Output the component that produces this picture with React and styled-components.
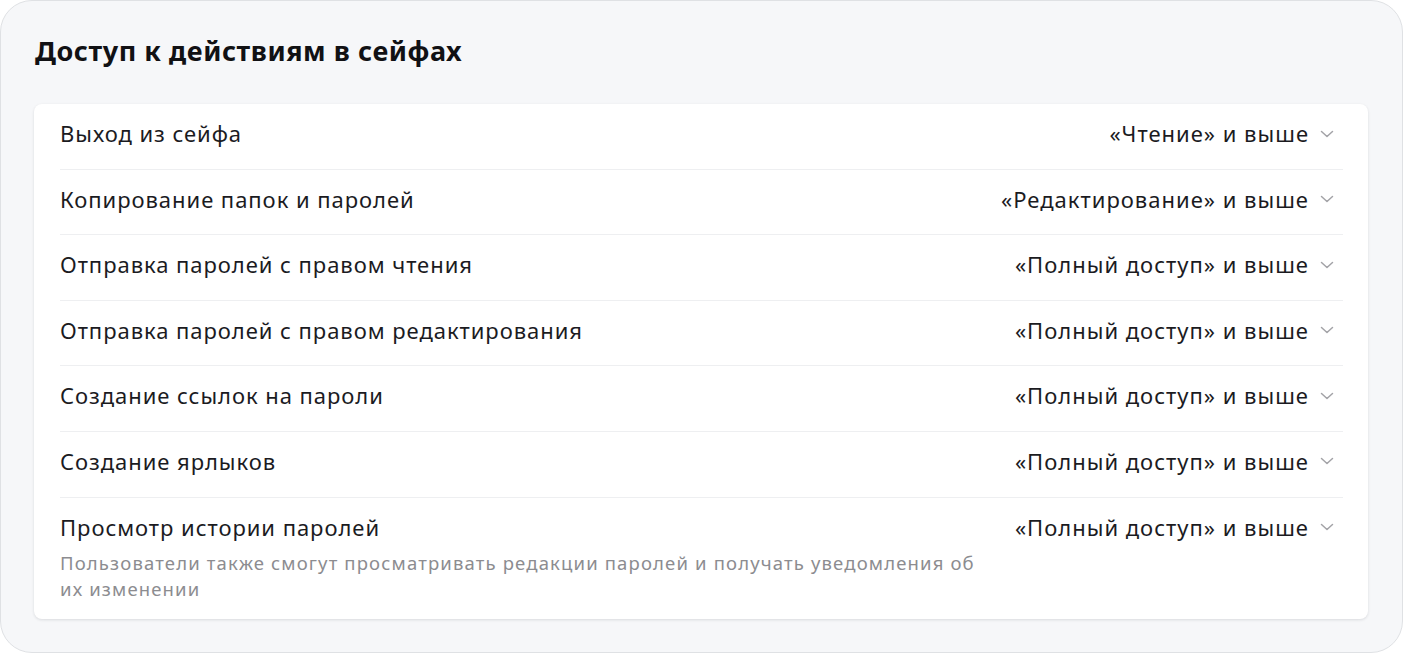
import React from "react";
import styled, { createGlobalStyle } from "styled-components";

const GlobalStyle = createGlobalStyle`
  html, body {
    margin: 0;
    padding: 0;
    background: #ffffff;
  }
  body {
    font-family: "Noto Sans", "Open Sans", sans-serif;
    color: #1b1b1f;
  }
`;

const Panel = styled.section`
  box-sizing: border-box;
  width: 1403px;
  height: 653px;
  background: #f6f7f9;
  border: 1px solid #dfe1e4;
  border-radius: 32px;
  padding: 31px 34px 0 33px;
`;

const Title = styled.h2`
  margin: 0 0 34px 1px;
  font-size: 27px;
  line-height: 38px;
  font-weight: 700;
  letter-spacing: 0.55px;
  color: #111114;
`;

const Card = styled.div`
  background: #ffffff;
  border-radius: 8px;
  box-shadow: 0 1px 3px rgba(20, 24, 36, 0.12);
  padding: 0 25px 0 26px;
`;

const Row = styled.div`
  display: flex;
  align-items: flex-start;
  justify-content: space-between;
  gap: 40px;
  padding: 15px 0 ${(p) => (p.$sub ? "17px" : "20.6px")} 0;
  border-top: ${(p) => (p.$first ? "none" : "1px solid #eeeff1")};
`;

const Left = styled.div`
  display: flex;
  flex-direction: column;
  max-width: 935px;
`;

const Label = styled.div`
  font-size: 22px;
  line-height: 29px;
  letter-spacing: 0.95px;
  color: #1b1b1f;
`;

const Hint = styled.div`
  margin-top: 8px;
  font-size: 18.5px;
  line-height: 26px;
  letter-spacing: 1.15px;
  color: #8c8c90;
`;

const Select = styled.button`
  display: flex;
  align-items: center;
  gap: 10px;
  border: 0;
  background: none;
  padding: 0 8px 0 0;
  font: inherit;
  font-size: 22px;
  line-height: 29px;
  letter-spacing: 1px;
  color: #1b1b1f;
  white-space: nowrap;
  cursor: pointer;
`;

const Chevron = () => (
  <svg width="16" height="16" viewBox="0 0 16 16" fill="none">
    <path
      d="M2.5 5.5 L8 10.5 L13.5 5.5"
      stroke="#a3a3a7"
      strokeWidth="1.5"
      strokeLinecap="round"
      strokeLinejoin="round"
    />
  </svg>
);

const rows = [
  { label: "Выход из сейфа", value: "«Чтение» и выше" },
  { label: "Копирование папок и паролей", value: "«Редактирование» и выше" },
  { label: "Отправка паролей с правом чтения", value: "«Полный доступ» и выше" },
  { label: "Отправка паролей с правом редактирования", value: "«Полный доступ» и выше" },
  { label: "Создание ссылок на пароли", value: "«Полный доступ» и выше" },
  { label: "Создание ярлыков", value: "«Полный доступ» и выше" },
  {
    label: "Просмотр истории паролей",
    value: "«Полный доступ» и выше",
    hint: "Пользователи также смогут просматривать редакции паролей и получать уведомления об их изменении",
  },
];

export default function App() {
  return (
    <>
      <GlobalStyle />
      <Panel>
        <Title>Доступ к действиям в сейфах</Title>
        <Card>
          {rows.map((r, i) => (
            <Row key={r.label} $first={i === 0} $sub={!!r.hint}>
              <Left>
                <Label>{r.label}</Label>
                {r.hint && <Hint>{r.hint}</Hint>}
              </Left>
              <Select>
                {r.value}
                <Chevron />
              </Select>
            </Row>
          ))}
        </Card>
      </Panel>
    </>
  );
}
